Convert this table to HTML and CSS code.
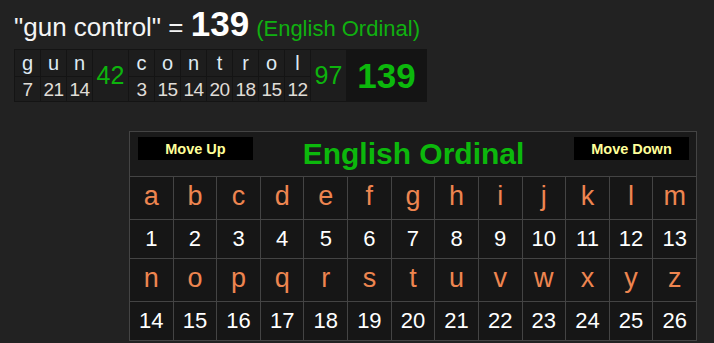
FILE: index.html
```html
<!DOCTYPE html>
<html lang="en">
<head>
    <meta charset="UTF-8">
    <meta name="viewport" content="width=device-width, initial-scale=1.0">
    <title>gun control - English Ordinal</title>
    <link rel="stylesheet" href="styles.css">
</head>
<body>
    <div class="phrase">
        <span class="phrase-text">"gun control" = </span>
        <span class="phrase-total">139</span>
        <span class="phrase-cipher">(English Ordinal)</span>
    </div>

    <div class="breakdown">
        <div class="bd-ltr">g</div>
        <div class="bd-ltr">u</div>
        <div class="bd-ltr">n</div>
        <div class="bd-sum">42</div>
        <div class="bd-ltr">c</div>
        <div class="bd-ltr">o</div>
        <div class="bd-ltr">n</div>
        <div class="bd-ltr">t</div>
        <div class="bd-ltr">r</div>
        <div class="bd-ltr">o</div>
        <div class="bd-ltr">l</div>
        <div class="bd-sum">97</div>
        <div class="bd-total">139</div>
        <div class="bd-num">7</div>
        <div class="bd-num">21</div>
        <div class="bd-num">14</div>
        <div class="bd-num">3</div>
        <div class="bd-num">15</div>
        <div class="bd-num">14</div>
        <div class="bd-num">20</div>
        <div class="bd-num">18</div>
        <div class="bd-num">15</div>
        <div class="bd-num">12</div>
    </div>

    <div class="chart">
        <div class="chart-head">
            <button class="move-btn">Move Up</button>
            <div class="chart-title">English Ordinal</div>
            <button class="move-btn">Move Down</button>
        </div>

        <div class="ltr">a</div><div class="ltr">b</div><div class="ltr">c</div><div class="ltr">d</div>
        <div class="ltr">e</div><div class="ltr">f</div><div class="ltr">g</div><div class="ltr">h</div>
        <div class="ltr">i</div><div class="ltr">j</div><div class="ltr">k</div><div class="ltr">l</div>
        <div class="ltr">m</div>

        <div class="num">1</div><div class="num">2</div><div class="num">3</div><div class="num">4</div>
        <div class="num">5</div><div class="num">6</div><div class="num">7</div><div class="num">8</div>
        <div class="num">9</div><div class="num">10</div><div class="num">11</div><div class="num">12</div>
        <div class="num">13</div>

        <div class="ltr">n</div><div class="ltr">o</div><div class="ltr">p</div><div class="ltr">q</div>
        <div class="ltr">r</div><div class="ltr">s</div><div class="ltr">t</div><div class="ltr">u</div>
        <div class="ltr">v</div><div class="ltr">w</div><div class="ltr">x</div><div class="ltr">y</div>
        <div class="ltr">z</div>

        <div class="num">14</div><div class="num">15</div><div class="num">16</div><div class="num">17</div>
        <div class="num">18</div><div class="num">19</div><div class="num">20</div><div class="num">21</div>
        <div class="num">22</div><div class="num">23</div><div class="num">24</div><div class="num">25</div>
        <div class="num">26</div>
    </div>
</body>
</html>
```

FILE: styles.css
```css
body {
    margin: 0;
    background-color: #222222;
    font-family: "Liberation Sans", Arial, sans-serif;
    color: #eeeeee;
}

/* phrase line */
.phrase {
    box-sizing: border-box;
    height: 49px;
    padding: 4px 0 0 14px;
    display: flex;
    align-items: baseline;
    white-space: pre;
}
.phrase-text {
    font-size: 26px;
    color: #f4f4f4;
}
.phrase-total {
    font-size: 35px;
    font-weight: bold;
    color: #ffffff;
    margin-right: 7px;
}
.phrase-cipher {
    font-size: 22px;
    color: #10b010;
}

/* letter by letter breakdown */
.breakdown {
    display: inline-grid;
    margin-left: 14px;
    grid-template-columns: 25px 25px 25px 35px repeat(7, 25px) 35px 79px;
    grid-template-rows: 26px 24px;
    gap: 1px;
    border: 1px solid #141414;
    background-color: #141414;
    vertical-align: top;
}
.breakdown div {
    display: flex;
    align-items: center;
    justify-content: center;
    background-color: #1d1d1d;
}
.bd-ltr {
    font-size: 20px;
    color: #dfeaf3;
}
.bd-num {
    font-size: 19px;
    letter-spacing: -0.5px;
    color: #e0ddd8;
    padding-top: 1px;
}
.bd-sum {
    grid-row: span 2;
    font-size: 25px;
    color: #0db40d;
}
.breakdown .bd-total {
    grid-row: span 2;
    font-size: 35px;
    font-weight: bold;
    color: #0cb80c;
    background-color: #141414;
}

/* cipher chart */
.chart {
    display: grid;
    grid-template-columns: repeat(13, 1fr);
    grid-template-rows: 44px 42px 38px 42px 38px;
    gap: 1px;
    width: 566px;
    margin: 29px 0 0 129px;
    border: 1px solid #444444;
    background-color: #444444;
}
.chart-head {
    grid-column: 1 / -1;
    display: flex;
    justify-content: space-between;
    align-items: flex-start;
    padding: 5px 7px 0 8px;
    background-color: #1a1a1a;
}
.move-btn {
    width: 115px;
    height: 23px;
    padding: 0;
    border: none;
    background-color: #000000;
    color: #ffff99;
    font-family: "Liberation Sans", Arial, sans-serif;
    font-size: 14.5px;
    font-weight: bold;
    cursor: pointer;
}
.chart-title {
    font-size: 30px;
    font-weight: bold;
    color: #0cb80c;
    line-height: 32px;
    margin-top: 1px;
}
.ltr,
.num {
    display: flex;
    align-items: center;
    justify-content: center;
    background-color: #161616;
}
.ltr {
    font-size: 27px;
    color: #ee8550;
    padding-bottom: 3px;
}
.num {
    font-size: 22px;
    color: #ffffff;
}
```
